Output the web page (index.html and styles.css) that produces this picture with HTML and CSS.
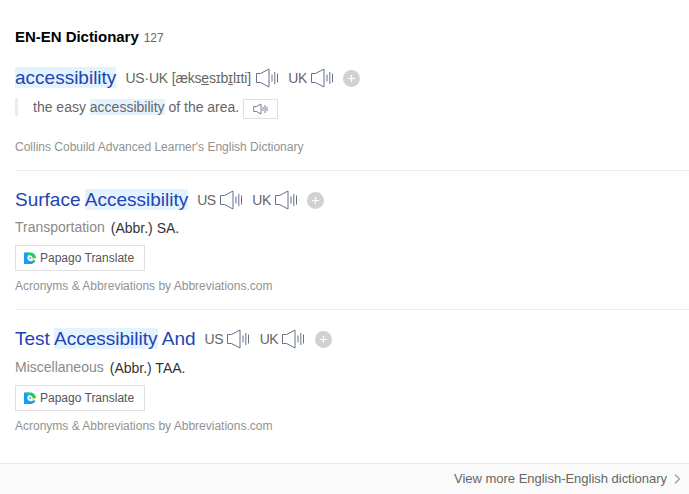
FILE: index.html
```html
<!DOCTYPE html>
<html lang="en">
<head>
<meta charset="utf-8">
<title>EN-EN Dictionary</title>
<link rel="stylesheet" href="styles.css">
</head>
<body>
<svg width="0" height="0" class="defs" aria-hidden="true">
  <symbol id="speaker" viewBox="0 0 24 20">
    <path d="M1.500 5.500H5.500L14 1v18L5.500 14.500H1.500z M17 6.500v7 M19.800 4v12 M22.500 5.500v9" fill="none" stroke="#66718a" stroke-width="1"/>
  </symbol>
  <symbol id="speaker-small" viewBox="0 0 15 12">
    <path d="M.7 3.500H3.500L8 1v10L3.500 8.500H.7z M10 4v4 M12 2v8 M14 3.800v4.400" fill="none" stroke="#66718a" stroke-width=".9"/>
  </symbol>
  <symbol id="plus" viewBox="0 0 17 17">
    <circle cx="8.5" cy="8.5" r="8.500" fill="#d1d1d1"/>
    <path d="M8.500 5v7M5 8.500h7" stroke="#fff" stroke-width="1.2"/>
  </symbol>
  <symbol id="papago" viewBox="0 0 12 12">
    <path d="M0 0.500H5L8 5.500L11.300 9.200C10 11.300 8 12 6 12H0z" fill="#129ff2"/>
    <path d="M2.500 0.500H6.500C9.500 0.500 12 3 12 6.200H8.500C8 4 6 2.600 3.500 3z" fill="#1fca70"/>
    <path d="M4.500 3.200C6.600 2.800 8.500 4.300 8.700 6L11.500 6.500L8.500 9C6 9.800 3.500 8.600 3.300 6.300C3.200 5 3.700 3.900 4.500 3.200z" fill="#e9fbff"/>
    <path d="M7.500 6.200H12L8.500 9z" fill="#efe06a"/>
    <circle cx="6.200" cy="6" r=".8" fill="#4a6a90"/>
  </symbol>
</svg>
<main class="content">
  <h2 class="heading">EN-EN Dictionary<span class="count">127</span></h2>

  <section class="entry first">
    <div class="word-row">
      <a class="word"><mark>accessibility</mark></a>
      <span class="pron ipa">US·UK [æks<u>e</u>sɪb<u>ɪ</u>lɪti]</span><svg class="speaker"><use href="#speaker"/></svg>
      <span class="pron">UK</span><svg class="speaker"><use href="#speaker"/></svg>
      <svg class="plus"><use href="#plus"/></svg>
    </div>
    <div class="example">
      <span class="sentence">the easy <mark>accessibility</mark> of the area.</span>
      <span class="listen"><svg><use href="#speaker-small"/></svg></span>
    </div>
    <p class="source collins">Collins Cobuild Advanced Learner's English Dictionary</p>
  </section>

  <section class="entry">
    <div class="word-row">
      <a class="word">Surface <mark>Accessibility</mark></a>
      <span class="pron">US</span><svg class="speaker"><use href="#speaker"/></svg>
      <span class="pron">UK</span><svg class="speaker"><use href="#speaker"/></svg>
      <svg class="plus"><use href="#plus"/></svg>
    </div>
    <p class="meaning"><span class="field">Transportation</span><span class="abbr">(Abbr.) SA.</span></p>
    <a class="translate"><svg><use href="#papago"/></svg><span>Papago Translate</span></a>
    <p class="source">Acronyms &amp; Abbreviations by Abbreviations.com</p>
  </section>

  <section class="entry last">
    <div class="word-row">
      <a class="word">Test <mark>Accessibility</mark> And</a>
      <span class="pron">US</span><svg class="speaker"><use href="#speaker"/></svg>
      <span class="pron">UK</span><svg class="speaker"><use href="#speaker"/></svg>
      <svg class="plus"><use href="#plus"/></svg>
    </div>
    <p class="meaning"><span class="field">Miscellaneous</span><span class="abbr">(Abbr.) TAA.</span></p>
    <a class="translate"><svg><use href="#papago"/></svg><span>Papago Translate</span></a>
    <p class="source">Acronyms &amp; Abbreviations by Abbreviations.com</p>
  </section>
</main>
<footer class="more">
  <span>View more English-English dictionary</span>
  <svg width="7" height="10" viewBox="0 0 7 10"><path d="M1 .5L5.500 5L1 9.500" fill="none" stroke="#999" stroke-width="1.1"/></svg>
</footer>
</body>
</html>
```
FILE: styles.css
```css
* { box-sizing: border-box; }
body {
  margin: 0;
  height: 494px;
  display: flex;
  flex-direction: column;
  overflow: hidden;
  background: #fff;
  font-family: "Liberation Sans", Arial, sans-serif;
  color: #666;
  white-space: nowrap;
}
p, h2 { margin: 0; }
.defs { position: absolute; }
mark { background: #e3f3ff; color: inherit; }
.content { flex: 1; padding: 27px 0 0 15px; }
.heading { height: 20px; line-height: 20px; font-size: 15px; letter-spacing: -0.03px; color: #000; }
.count { margin-left: 5px; font-size: 12px; font-weight: 400; color: #666; }

.entry { height: 139px; padding-top: 18px; border-top: 1px solid #eee; }
.entry.first { height: 123px; padding-top: 20px; border-top: 0; }
.word-row { display: flex; align-items: center; height: 22px; }
.word { margin-right: 9px; font-size: 19px; line-height: 22px; color: #2343b5; }
.pron { font-size: 14px; line-height: 20px; letter-spacing: -0.5px; }
.ipa { letter-spacing: -0.19px; }
.ipa u { text-underline-offset: 1px; }
.speaker { flex: none; width: 24px; height: 20px; margin: 0 9.6px 0 3.1px; }
.ipa + .speaker { margin-left: 3.8px; }
.plus { flex: none; width: 17px; height: 17px; }

.example {
  display: flex;
  align-items: center;
  height: 20px;
  margin-top: 8px;
}
.example::before { content: ""; width: 3px; height: 18px; background: #ebebeb; margin-right: 15px; }
.sentence { font-size: 14px; line-height: 16px; }
.listen {
  display: flex;
  align-items: center;
  justify-content: center;
  width: 35px;
  height: 20px;
  margin: 3px 0 0 4px;
  border: 1px solid #e0e0e0;
}
.listen svg { width: 15px; height: 12px; }
.source { height: 16px; margin-top: 7px; font-size: 12px; line-height: 16px; color: #929292; }
.collins { margin-top: 22px; }
.meaning { display: flex; height: 18px; margin-top: 7px; font-size: 14px; line-height: 18px; }
.last .meaning { margin-top: 8px; }
.field { color: #8a8a8a; }
.abbr { margin: 1px 0 0 6px; color: #333; }
.translate {
  display: flex;
  align-items: center;
  width: 130px;
  height: 26px;
  margin-top: 9px;
  padding-left: 8px;
  border: 1px solid #e0e0e0;
  font-size: 12px;
  color: #555;
}
.translate svg { width: 12px; height: 12px; margin-right: 4px; }
.more {
  display: flex;
  align-items: center;
  justify-content: flex-end;
  height: 31px;
  padding: 0 8px 1px 0;
  border-top: 1px solid #eaeaea;
  background: #fafafa;
  font-size: 13px;
}
.more span { letter-spacing: -0.02px; }
.more svg { margin-left: 7px; }
```
